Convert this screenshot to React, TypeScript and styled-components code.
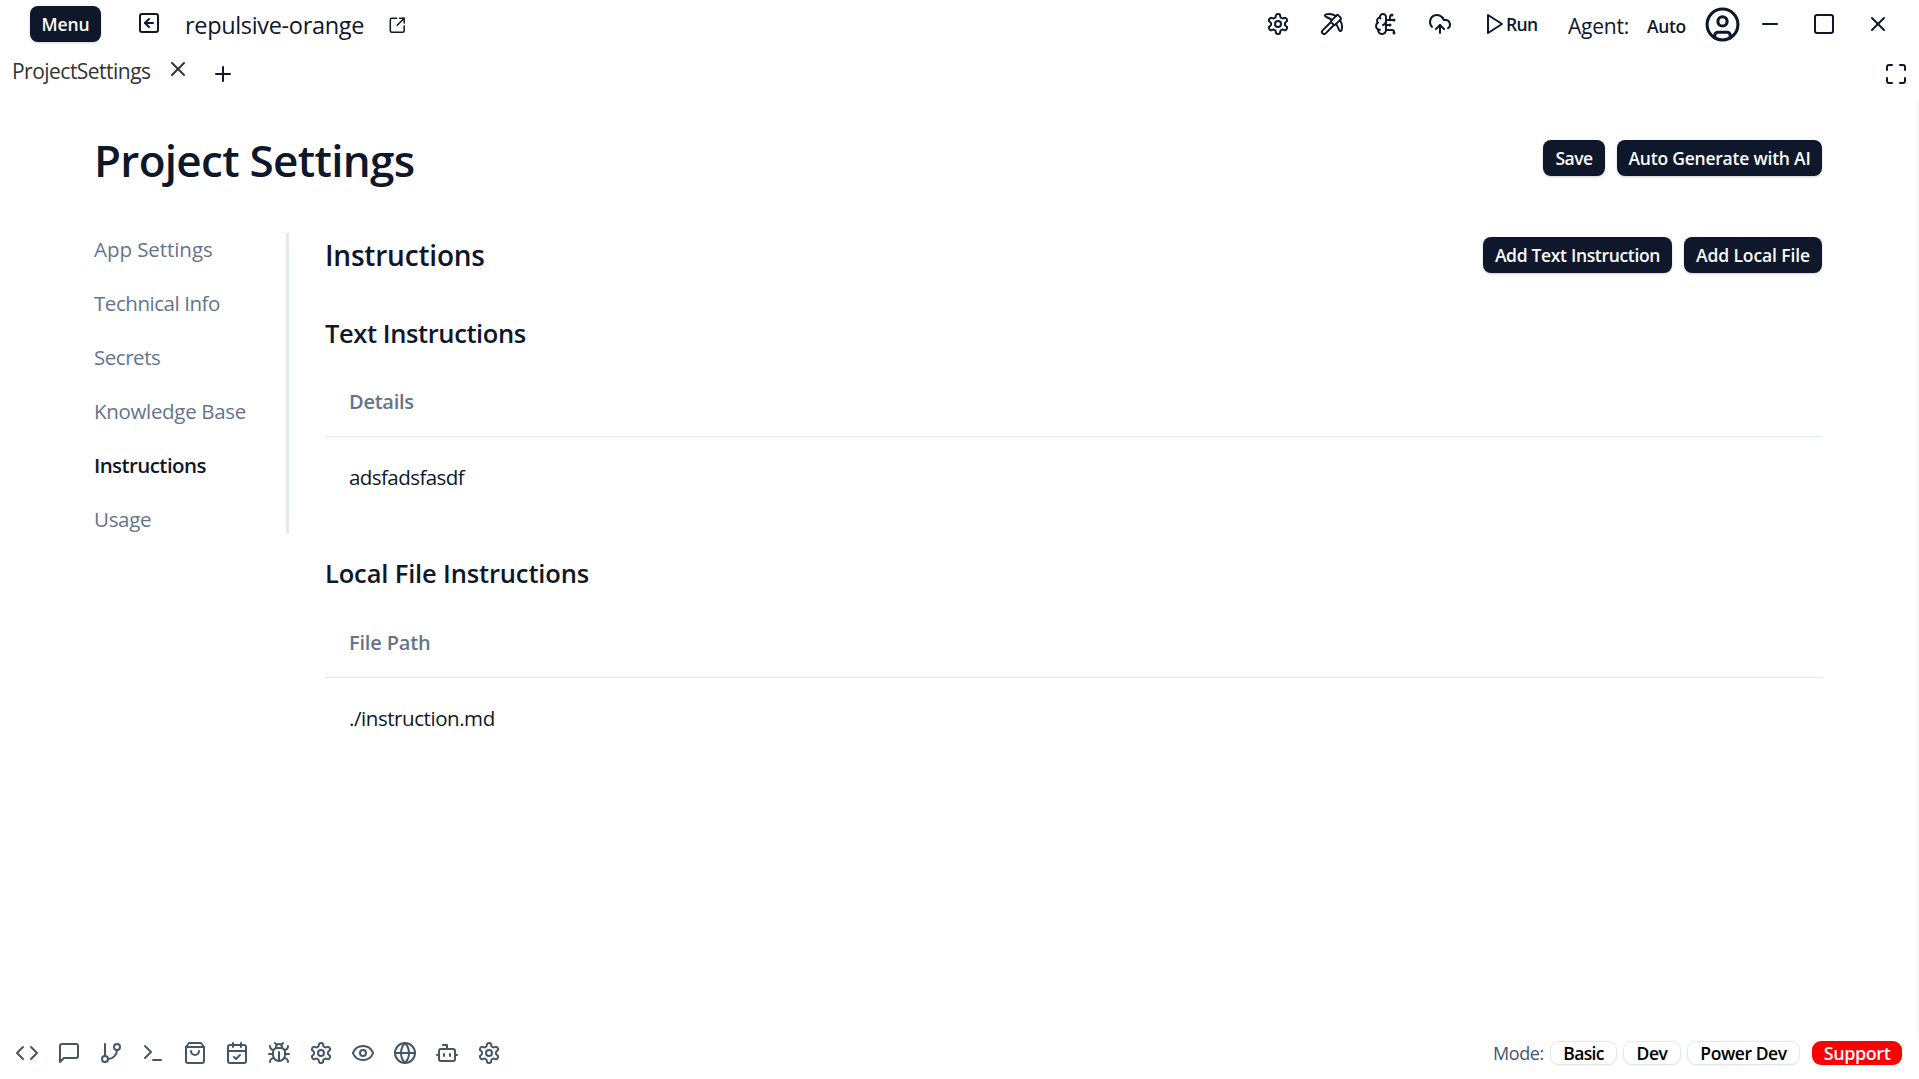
import React from 'react';
import styled, { createGlobalStyle } from 'styled-components';
import {
  BrainCircuit,
  CalendarCheck,
  CircleUser,
  CloudUpload,
  Bot,
  Code,
  Eye,
  GitBranch,
  Globe,
  Maximize,
  Minus,
  Pickaxe,
  Plus,
  Square,
  SquareArrowLeft,
  SquareArrowOutUpRight,
  Terminal,
  X,
} from 'lucide-react';

const ink = '#0f172a';
const muted = '#64748b';
const line = '#e2e8f0';

const GlobalStyle = createGlobalStyle`
  *, *::before, *::after { box-sizing: border-box; }
  body {
    margin: 0;
    background: #fff;
    color: ${ink};
    font-family: "Segoe UI", "Open Sans", "Noto Sans", sans-serif;
    overflow: hidden;
  }
  h1, h2, h3, p { margin: 0; }
  button { font-family: inherit; }
  svg { display: block; flex: none; }
`;

const Window = styled.div`
  display: flex;
  flex-direction: column;
  width: 100%;
  height: 100vh;
`;

const TitleBar = styled.header`
  display: flex;
  align-items: center;
  height: 48px;
  padding: 0 14px 0 30px;
  flex: none;
`;

const Button = styled.button<{ $width: number; $track?: number }>`
  display: flex;
  align-items: center;
  justify-content: center;
  width: ${(p) => p.$width}px;
  height: 36px;
  padding: 0;
  border: 0;
  border-radius: 8px;
  background: ${ink};
  color: #f8fafc;
  font-size: 17.5px;
  font-weight: 600;
  letter-spacing: ${(p) => p.$track ?? 0}px;
  white-space: nowrap;
  box-shadow: 0 1px 3px rgba(0, 0, 0, 0.12), 0 1px 2px rgba(0, 0, 0, 0.08);
`;

const BackButton = styled.span`
  display: flex;
  margin-left: 36px;
  padding-bottom: 2px;
`;

const ProjectName = styled.span`
  width: 203px;
  padding: 2px 0 0 24px;
  font-size: 23.5px;
  line-height: 32px;
  letter-spacing: -0.33px;
  white-space: nowrap;
`;

const OpenLink = styled.span`
  display: flex;
  margin-left: 24px;
  padding-top: 2px;
`;

const TitleTools = styled.div`
  display: flex;
  align-items: center;
  margin-left: auto;
`;

const ToolSlot = styled.span`
  display: flex;
  justify-content: center;
  width: 54px;
`;

const RunButton = styled.span`
  display: flex;
  align-items: center;
  width: 101px;
  padding-left: 15px;
  font-size: 17.5px;
  font-weight: 600;
  letter-spacing: -0.7px;
  line-height: 24px;
`;

const AgentLabel = styled.span`
  width: 79px;
  padding: 3px 0 0;
  font-size: 21px;
  line-height: 28px;
  letter-spacing: -0.2px;
`;

const AgentValue = styled.span`
  width: 55px;
  padding-top: 3px;
  font-size: 17.5px;
  font-weight: 600;
  line-height: 24px;
  letter-spacing: -0.4px;
`;

const Avatar = styled.span`
  display: flex;
  justify-content: center;
  width: 41px;
  padding-right: 1px;
`;

const TabBar = styled.nav`
  display: flex;
  align-items: center;
  height: 53px;
  padding: 0 11px 1px 12px;
  flex: none;
`;

const Tab = styled.span`
  display: flex;
  align-items: center;
  width: 179px;
  padding-bottom: 8px;
  color: #333;
`;

const TabLabel = styled.span`
  width: 154px;
  padding-top: 1px;
  font-size: 21px;
  line-height: 28px;
  letter-spacing: -0.52px;
`;

const TabClose = styled.span`
  display: flex;
  padding-bottom: 2px;
`;

const NewTab = styled.span`
  display: flex;
  margin-left: 20px;
`;

const Expand = styled.span`
  display: flex;
  margin-left: auto;
`;

const Main = styled.main`
  flex: 1;
  min-height: 0;
  padding: 29px 94px 0;
  border-right: 3px solid #f8f8ff;
`;

const PageHead = styled.div`
  display: flex;
  justify-content: space-between;
  height: 60px;
`;

const PageTitle = styled.h1`
  font-size: 44px;
  font-weight: 600;
  line-height: 60px;
  letter-spacing: -0.7px;
`;

const Actions = styled.div<{ $top?: number }>`
  display: flex;
  gap: 12px;
  padding-top: ${(p) => p.$top ?? 0}px;
`;

const Columns = styled.div`
  display: flex;
  align-items: flex-start;
  margin-top: 43px;
`;

const SideNav = styled.nav`
  display: flex;
  flex-direction: column;
  gap: 24px;
  width: 195px;
  border-right: 3px solid ${line};
  flex: none;
`;

const SideLink = styled.a<{ $active?: boolean; $track: number }>`
  height: 30px;
  font-size: 20.5px;
  line-height: 32px;
  font-weight: ${(p) => (p.$active ? 600 : 400)};
  color: ${(p) => (p.$active ? ink : muted)};
  letter-spacing: ${(p) => p.$track}px;
`;

const Content = styled.section`
  flex: 1;
  margin-left: 36px;
  padding-top: 4px;
`;

const SectionHead = styled.div`
  display: flex;
  justify-content: space-between;
  align-items: center;
  height: 36px;
`;

const SectionTitle = styled.h2`
  font-size: 28px;
  font-weight: 600;
  line-height: 36px;
  letter-spacing: -0.2px;
`;

const Group = styled.div<{ $gap: number }>`
  margin-top: ${(p) => p.$gap}px;
`;

const GroupTitle = styled.h3<{ $track: number }>`
  font-size: 25.5px;
  font-weight: 600;
  line-height: 36px;
  letter-spacing: ${(p) => p.$track}px;
`;

const HeadCell = styled.div<{ $lead: number; $track: number }>`
  display: flex;
  align-items: center;
  height: 71px;
  margin-top: ${(p) => p.$lead}px;
  padding: 0 24px;
  border-bottom: 1px solid ${line};
  color: ${muted};
  font-size: 20px;
  font-weight: 600;
  letter-spacing: ${(p) => p.$track}px;
`;

const Cell = styled.div<{ $track: number }>`
  display: flex;
  align-items: center;
  height: 80px;
  padding: 0 24px;
  font-size: 20.5px;
  letter-spacing: ${(p) => p.$track}px;
`;

const StatusBar = styled.footer`
  display: flex;
  align-items: flex-start;
  height: 41px;
  padding: 0 17px 0 15px;
  flex: none;
  color: #475569;
`;

const Dock = styled.div`
  display: flex;
  align-items: center;
  gap: 18px;
  height: 30px;
`;

const Modes = styled.div`
  display: flex;
  align-items: center;
  height: 30px;
  margin-left: auto;
`;

const ModeLabel = styled.span`
  width: 57px;
  font-size: 18px;
  line-height: 26px;
  letter-spacing: -0.41px;
`;

const Pill = styled.button<{ $width: number; $track: number; $alert?: boolean }>`
  display: flex;
  align-items: center;
  justify-content: center;
  width: ${(p) => p.$width}px;
  height: 24px;
  margin-right: ${(p) => (p.$alert ? 0 : 6)}px;
  margin-left: ${(p) => (p.$alert ? 6 : 0)}px;
  padding: 0;
  border: ${(p) => (p.$alert ? '0' : `1px solid ${line}`)};
  border-radius: 9px;
  background: ${(p) => (p.$alert ? '#ff0000' : '#fff')};
  color: ${(p) => (p.$alert ? '#f8fafc' : '#000')};
  font-size: ${(p) => (p.$alert ? 18 : 17.5)}px;
  font-weight: 600;
  line-height: 22px;
  letter-spacing: ${(p) => p.$track}px;
  white-space: nowrap;
  box-shadow: 0 1px 2px rgba(0, 0, 0, 0.06);
`;

function Glyph({ paths, children }: { paths: string[]; children?: React.ReactNode }) {
  return (
    <svg
      width="24"
      height="24"
      viewBox="0 0 24 24"
      fill="none"
      stroke="currentColor"
      strokeWidth="2"
      strokeLinecap="round"
      strokeLinejoin="round"
    >
      {paths.map((d) => (
        <path key={d} d={d} />
      ))}
      {children}
    </svg>
  );
}

const Gear = () => (
  <Glyph
    paths={[
      'M12.22 2h-.44a2 2 0 0 0-2 2v.18a2 2 0 0 1-1 1.73l-.43.25a2 2 0 0 1-2 0l-.15-.08a2 2 0 0 0-2.73.73l-.22.38a2 2 0 0 0 .73 2.73l.15.1a2 2 0 0 1 1 1.72v.51a2 2 0 0 1-1 1.74l-.15.09a2 2 0 0 0-.73 2.73l.22.38a2 2 0 0 0 2.73.73l.15-.08a2 2 0 0 1 2 0l.43.25a2 2 0 0 1 1 1.73V20a2 2 0 0 0 2 2h.44a2 2 0 0 0 2-2v-.18a2 2 0 0 1 1-1.73l.43-.25a2 2 0 0 1 2 0l.15.08a2 2 0 0 0 2.73-.73l.22-.39a2 2 0 0 0-.73-2.73l-.15-.08a2 2 0 0 1-1-1.74v-.5a2 2 0 0 1 1-1.74l.15-.09a2 2 0 0 0 .73-2.73l-.22-.38a2 2 0 0 0-2.73-.73l-.15.08a2 2 0 0 1-2 0l-.43-.25a2 2 0 0 1-1-1.73V4a2 2 0 0 0-2-2z',
    ]}
  >
    <circle cx="12" cy="12" r="3" />
  </Glyph>
);

const RunGlyph = () => <Glyph paths={['M6 3 20 12 6 21Z']} />;

const Message = () => (
  <Glyph paths={['M21 15a2 2 0 0 1-2 2H7l-4 4V5a2 2 0 0 1 2-2h14a2 2 0 0 1 2 2z']} />
);

const Bag = () => (
  <Glyph
    paths={[
      'M6 2 3 6v14a2 2 0 0 0 2 2h14a2 2 0 0 0 2-2V6l-3-4Z',
      'M3 6h18',
      'M16 10a4 4 0 0 1-8 0',
    ]}
  />
);

const Beetle = () => (
  <Glyph
    paths={[
      'm8 2 1.88 1.88',
      'M14.12 3.88 16 2',
      'M9 7.13v-1a3.003 3.003 0 1 1 6 0v1',
      'M12 20c-3.3 0-6-2.7-6-6v-3a4 4 0 0 1 4-4h4a4 4 0 0 1 4 4v3c0 3.3-2.7 6-6 6',
      'M12 20v-9',
      'M6.53 9C4.6 8.8 3 7.1 3 5',
      'M6 13H2',
      'M3 21c0-2.1 1.7-3.9 3.8-4',
      'M20.97 5c0 2.1-1.6 3.8-3.5 4',
      'M22 13h-4',
      'M17.2 17c2.1.1 3.8 1.9 3.8 4',
    ]}
  />
);

const titleTools = [Gear, Pickaxe, BrainCircuit, CloudUpload];
const windowControls = [Minus, Square, X];
const dockIcons = [
  Code, Message, GitBranch, Terminal, Bag, CalendarCheck,
  Beetle, Gear, Eye, Globe, Bot, Gear,
];

const sections = [
  { label: 'App Settings', track: -0.06 },
  { label: 'Technical Info', track: -0.45 },
  { label: 'Secrets', track: -0.46 },
  { label: 'Knowledge Base', track: -0.32 },
  { label: 'Instructions', track: -0.58, active: true },
  { label: 'Usage', track: -0.31 },
];

export default function App() {
  return (
    <Window>
      <GlobalStyle />
      <TitleBar>
        <Button $width={71} $track={-0.11}>Menu</Button>
        <BackButton><SquareArrowLeft size={24} /></BackButton>
        <ProjectName>repulsive-orange</ProjectName>
        <OpenLink><SquareArrowOutUpRight size={18.5} /></OpenLink>
        <TitleTools>
          {titleTools.map((Icon, i) => (
            <ToolSlot key={i}><Icon /></ToolSlot>
          ))}
          <RunButton><RunGlyph />Run</RunButton>
          <AgentLabel>Agent:</AgentLabel>
          <AgentValue>Auto</AgentValue>
          <Avatar><CircleUser size={37} /></Avatar>
          {windowControls.map((Icon, i) => (
            <ToolSlot key={i}><Icon size={24} /></ToolSlot>
          ))}
        </TitleTools>
      </TitleBar>

      <TabBar>
        <Tab>
          <TabLabel>ProjectSettings</TabLabel>
          <TabClose><X size={24} /></TabClose>
        </Tab>
        <NewTab><Plus size={24} /></NewTab>
        <Expand><Maximize size={24} /></Expand>
      </TabBar>

      <Main>
        <PageHead>
          <PageTitle>Project Settings</PageTitle>
          <Actions $top={10}>
            <Button $width={62} $track={-0.5}>Save</Button>
            <Button $width={205} $track={-0.22}>Auto Generate with AI</Button>
          </Actions>
        </PageHead>
        <Columns>
          <SideNav>
            {sections.map((s) => (
              <SideLink key={s.label} $active={s.active} $track={s.track}>{s.label}</SideLink>
            ))}
          </SideNav>
          <Content>
            <SectionHead>
              <SectionTitle>Instructions</SectionTitle>
              <Actions>
                <Button $width={189} $track={-0.33}>Add Text Instruction</Button>
                <Button $width={138} $track={-0.11}>Add Local File</Button>
              </Actions>
            </SectionHead>
            <Group $gap={42}>
              <GroupTitle $track={-0.4}>Text Instructions</GroupTitle>
              <HeadCell $lead={15} $track={-0.25}>Details</HeadCell>
              <Cell $track={-0.56}>adsfadsfasdf</Cell>
            </Group>
            <Group $gap={38}>
              <GroupTitle $track={-0.15}>Local File Instructions</GroupTitle>
              <HeadCell $lead={16} $track={-0.18}>File Path</HeadCell>
              <Cell $track={-0.44}>./instruction.md</Cell>
            </Group>
          </Content>
        </Columns>
      </Main>

      <StatusBar>
        <Dock>
          {dockIcons.map((Icon, i) => (
            <Icon key={i} />
          ))}
        </Dock>
        <Modes>
          <ModeLabel>Mode:</ModeLabel>
          <Pill $width={67} $track={-0.7}>Basic</Pill>
          <Pill $width={58} $track={-0.4}>Dev</Pill>
          <Pill $width={113} $track={-0.42}>Power Dev</Pill>
          <Pill $width={90} $track={-0.42} $alert>Support</Pill>
        </Modes>
      </StatusBar>
    </Window>
  );
}
